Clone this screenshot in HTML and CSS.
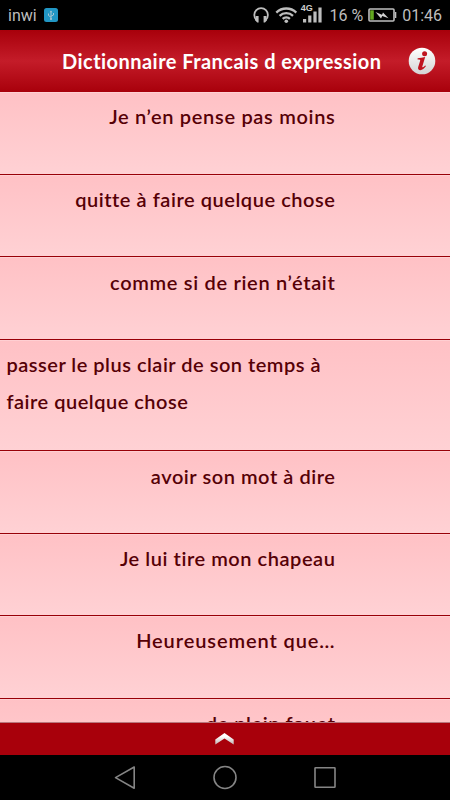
FILE: index.html
```html
<!DOCTYPE html>
<html lang="fr">
<head>
  <meta charset="UTF-8" />
  <meta name="viewport" content="width=device-width, initial-scale=1.0" />
  <title>Dictionnaire Francais d expression</title>
  <link rel="stylesheet" href="styles.css">
</head>
<body>
  <div class="status">
    <span class="operateur">inwi</span>
    <svg class="usb" width="14" height="14" viewBox="0 0 14 14">
      <rect width="14" height="14" rx="2.5" fill="#2196c4" />
      <path d="M7 3.5v8M4.5 5.5v2L7 9.2M9.5 5v2L7 8.3" fill="none" stroke="#a9c6d2" stroke-width="1" />
      <path d="M5.6 4.2L7 2.4l1.4 1.8z" fill="#a9c6d2" />
      <circle cx="7" cy="11" r="1" fill="#a9c6d2" />
    </svg>
    <svg class="icones" width="96" height="30" viewBox="252 0 96 30">
      <!-- casque -->
      <path d="M256.8 20.5c-1.8-1.6-2.5-3.4-2.5-5.5a6.8 6.8 0 0 1 13.6 0c0 2.1-.7 3.9-2.5 5.5" fill="none" stroke="#bebebe" stroke-width="1.8" />
      <path d="M255.8 16h2.8v6.4h-1.4l-1.8-2zM266.4 16h-2.8v6.4h1.4l1.8-2z" fill="#bebebe" />
      <!-- wifi -->
      <g fill="none" stroke="#bebebe" stroke-width="2.3">
        <path d="M276.3 12.6a14.3 14.3 0 0 1 20 0" />
        <path d="M279.6 15.9a9.6 9.6 0 0 1 13.4 0" />
        <path d="M282.7 18.9a5.2 5.2 0 0 1 7.2 0" />
      </g>
      <circle cx="286.3" cy="21.3" r="1.8" fill="#bebebe" />
      <!-- reseau -->
      <text class="reseau" x="300.7" y="11.3">4G</text>
      <path d="M303 19h3.2v3.5H303zM308.2 15.5h3.2v7h-3.2zM313.4 11.5h3.2v11h-3.2zM318.4 7.5h3.2v15h-3.2z" fill="#bebebe" />
    </svg>
    <span class="pourcent">16 %</span>
    <svg class="batterie" width="29" height="14" viewBox="0 0 29 14">
      <rect x="1" y="1" width="25" height="12" rx="1" fill="none" stroke="#bebebe" stroke-width="1.6" />
      <path d="M27 4h1.3v6H27z" fill="#bebebe" />
      <rect x="2.2" y="2.3" width="3.6" height="9.4" fill="#63a820" />
      <path d="M7.5 4l6.5 2.8 1-2.4 5.5 5.8-6.2-2.2-1.3 2.4z" fill="#d0d0d0" />
    </svg>
    <span class="heure">01:46</span>
  </div>

  <header class="entete">
    <h1>Dictionnaire Francais d expression</h1>
    <svg class="info" width="28" height="28" viewBox="0 0 28 28">
      <defs>
        <linearGradient id="bouton" x1="0" y1="0" x2="0" y2="1">
          <stop offset="0" stop-color="#fff" />
          <stop offset="1" stop-color="#d4d4d4" />
        </linearGradient>
      </defs>
      <circle cx="14" cy="14" r="13.3" fill="url(#bouton)" />
      <circle cx="16.6" cy="6.7" r="2.5" fill="#c0141f" />
      <path d="M9.6 11.3c2.6-.2 5-.6 7.6-1.2l-2.9 9.5c-.3 1.1.4 1.2 2.8-1.2l.9.7c-2 2.7-3.6 4.1-5.6 4.1-1.9 0-2.8-1.2-2.2-3.2l1.9-6.1c.3-1.1 0-1.5-2.5-1.5z" fill="#c0141f" />
    </svg>
  </header>

  <main class="liste">
    <div class="expression"><p class="large">Je n’en pense pas moins</p></div>
    <div class="expression"><p>quitte à faire quelque chose</p></div>
    <div class="expression"><p class="large">comme si de rien n’était</p></div>
    <div class="expression longue"><p>passer le plus clair de son temps à<br>faire quelque chose</p></div>
    <div class="expression"><p>avoir son mot à dire</p></div>
    <div class="expression"><p>Je lui tire mon chapeau</p></div>
    <div class="expression"><p class="tres-large">Heureusement que…</p></div>
    <div class="expression"><p>de plein fouet</p></div>
  </main>

  <footer class="tiroir">
    <svg width="20" height="14" viewBox="0 0 20 14">
      <defs>
        <linearGradient id="fleche" x1="0" y1="0" x2="0" y2="1">
          <stop offset="0.3" stop-color="#fff" />
          <stop offset="1" stop-color="#bfb5b5" />
        </linearGradient>
      </defs>
      <path d="M9.5 1l9.2 6.6v4.8L9.5 6.6.3 12.4V7.6z" fill="url(#fleche)" />
    </svg>
  </footer>

  <nav class="navigation">
    <svg width="450" height="45" viewBox="0 0 450 45" fill="none" stroke="#858585" stroke-width="1.6" stroke-linejoin="round">
      <path d="M134.2 12v21.2L115.5 22.6z" />
      <circle cx="225" cy="22.5" r="11" />
      <rect x="315" y="12.7" width="20" height="19.6" rx="0.6" />
    </svg>
  </nav>
</body>
</html>
```

FILE: styles.css
```css
body {
  margin: 0;
  width: 450px;
  height: 800px;
  display: flex;
  flex-direction: column;
  overflow: hidden;
  background: #000;
  font-family: Lato, sans-serif;
}
.status {
  height: 30px;
  flex: none;
  display: flex;
  align-items: center;
  box-sizing: border-box;
  padding: 0 8px;
  font-family: Roboto, sans-serif;
  font-size: 16px;
  color: #bebebe;
}
.usb {
  margin-left: 7px;
}
.icones {
  margin-left: auto;
}
.reseau {
  font: bold 9px "Liberation Sans", sans-serif;
  fill: #d0d0d0;
}
.pourcent {
  margin-right: 5px;
  margin-left: -19px;
}
.batterie {
  margin-right: 5px;
}
.entete {
  height: 62px;
  flex: none;
  display: flex;
  align-items: center;
  box-sizing: border-box;
  padding: 0 14px 0 62px;
  background: linear-gradient(#a8000b, #c41c29 50%, #a8000b);
}
.entete h1 {
  margin: 0;
  font-size: 20px;
  font-weight: 700;
  letter-spacing: 0.46px;
  white-space: nowrap;
  color: #fff;
}
.info {
  margin-left: auto;
}
.liste {
  flex: 1;
  min-height: 0;
  overflow: hidden;
}
.expression {
  height: 82.4px;
  box-sizing: border-box;
  padding: 6.3px 114.5px 0 6.5px;
  border-bottom: 1px solid #980008;
  background: linear-gradient(#ffc1c5, #ffd1d4);
  box-shadow: inset 0 1px #ffcfd2;
}
.expression:first-child {
  height: 83px;
}
.expression p {
  margin: 0;
  font-size: 20px;
  font-weight: 600;
  line-height: 37px;
  letter-spacing: 0.55px;
  text-align: right;
  white-space: nowrap;
  color: #560006;
}
.expression .large {
  letter-spacing: 0.68px;
}
.expression .tres-large {
  letter-spacing: 0.9px;
}
.longue {
  height: 111.6px;
}
.expression.longue p {
  letter-spacing: 0.5px;
  text-align: left;
}
.tiroir {
  height: 32px;
  flex: none;
  display: flex;
  align-items: center;
  justify-content: center;
  border-top: 1px solid #b9777c;
  background: #a8000b;
}
.navigation {
  height: 45px;
  flex: none;
}
```
